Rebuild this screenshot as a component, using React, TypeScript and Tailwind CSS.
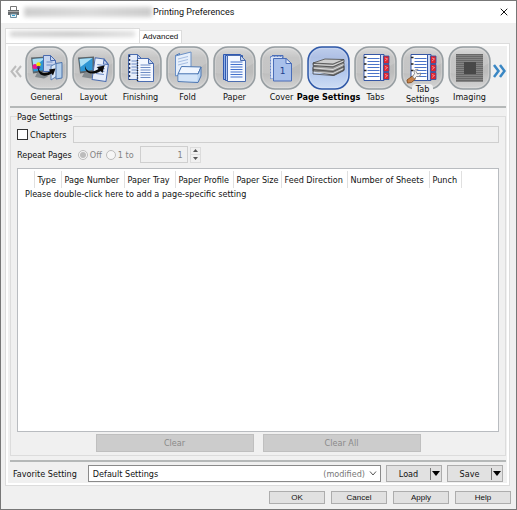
import { useState, type ReactNode } from 'react';
import { X } from 'lucide-react';

interface Category {
  id: string;
  label: string;
  icon: ReactNode;
}

// Sheet of paper with a folded corner and ruled lines
function Sheet({ x, y, w, h, fill = '#e6edfa', line = '#6f8cc4', gap = 3 }: {
  x: number; y: number; w: number; h: number; fill?: string; line?: string; gap?: number;
}) {
  const rows = Math.floor((h - 8) / gap);
  return (
    <g>
      <path
        d={`M${x} ${y}h${w - 5}l5 5v${h - 5}h-${w}z`}
        fill={fill}
        stroke="#4a6cb0"
        strokeLinejoin="round"
      />
      <path d={`M${x + w - 5} ${y}v5h5z`} fill="#c3d2ee" stroke="#4a6cb0" strokeLinejoin="round" />
      {Array.from({ length: rows }, (_, i) => (
        <path key={i} d={`M${x + 3} ${y + 6.5 + i * gap}h${w - 6}`} stroke={line} />
      ))}
    </g>
  );
}

function Monitor() {
  return (
    <g>
      <path d="M12 27l-2 4 9 1.500 4-2-5-4z" fill="#858b8f" />
      <path d="M6 11.500l16-1v15l-14 2z" fill="#5d656a" />
      <path d="M7.500 13l13-1v12l-12 1.500z" fill="#2f96d4" />
      <path d="M7.500 13l13-1-12 9z" fill="#a9def5" />
    </g>
  );
}

function TabbedSheet() {
  return (
    <g>
      <path d="M12 8.500h18v26h-18z" fill="#cdd9f2" stroke="#3556a5" />
      <path d="M29.500 10h5.500v7.500h-5.500zM29.500 18.500h5.500v7h-5.500zM29.500 26.500h5.500v7h-5.500z" fill="#e0242f" stroke="#2c4ea2" strokeWidth=".8" />
      <path d="M31 12l2.500 1-2.500 2M31 20.500l2.500 1-2.500 2M31 28.500l2.500 1-2.500 2" stroke="#f3a9ad" fill="none" strokeWidth=".8" />
      <path d="M10 8.500h16.500v26H10z" fill="#fff" stroke="#3556a5" />
      <path d="M13.500 12.500h12M13.500 15.500h12M13.500 18.500h12M13.500 21.500h12M13.500 24.500h12M13.500 27.500h12M13.500 30.500h12" stroke="#4b74c8" />
      <path d="M10 11.500h2.500M10 18h2.500M10 24.500h2.500M10 31h2.500" stroke="#222" strokeWidth="1.500" />
    </g>
  );
}

const categories: Category[] = [
  {
    id: 'general',
    label: 'General',
    icon: (
      <>
        <Monitor />
        <circle cx="10" cy="20.500" r="2.500" fill="#ed1690" />
        <circle cx="13.500" cy="18.500" r="2.200" fill="#f7e400" />
        <circle cx="13.500" cy="21.500" r="1.800" fill="#5b2d91" />
        <Sheet x={18.500} y={9.500} w={12} h={16} fill="#c8d6f0" />
        <path d="M26 20l6-3v13l-6 4z" fill="#dbe9f8" stroke="#5c82b5" />
        <path d="M31 17.500l6-1v15.500l-6 1z" fill="#b4d0ec" stroke="#4c74ad" />
        <path d="M13 20.500c1 7 7 7.500 12 5l-1-2 6.500-1-2.500 7-1.500-2c-7 4.500-14.500 2-13.500-7z" fill="#0a0a0a" />
      </>
    ),
  },
  {
    id: 'layout',
    label: 'Layout',
    icon: (
      <>
        <Monitor />
        <g transform="rotate(8 28 24)">
          <Sheet x={21.500} y={12.500} w={14} h={22} />
        </g>
        <path d="M13 19.500c1 7 8 7.500 13.500 3.500l-1.500-2 7.500-1.500-2 7.500-1.800-2c-8 5-16.700 2.500-15.700-5.500z" fill="#0a0a0a" />
      </>
    ),
  },
  {
    id: 'finishing',
    label: 'Finishing',
    icon: (
      <>
        <Sheet x={9.500} y={8.500} w={14} h={25} />
        <path d="M10.500 9v25" stroke="#222f55" strokeWidth="1.500" strokeDasharray="2 2" />
        <Sheet x={18.500} y={12.500} w={16} h={23} fill="#f4f7ff" gap={2.500} />
        <path d="M18.500 14v22" stroke="#222" strokeWidth="1.500" strokeDasharray="1 1.500" />
      </>
    ),
  },
  {
    id: 'fold',
    label: 'Fold',
    icon: (
      <>
        <path d="M9.500 9.500l4-2v20l-4 2z" fill="#b5cdec" stroke="#4b76b3" />
        <path d="M9.500 10l15.500-4v20l-15.500 4z" fill="#e6effb" stroke="#6a90c6" />
        <path d="M12 13l10-2.500M12 16l10-2.500M12 19l10-2.500" stroke="#a5bde2" />
        <path d="M15.500 20.500l19.500.5-3 7h-20z" fill="#f0f6ff" stroke="#4b76b3" />
        <path d="M12 28h20l3-7v9l-3 6.500-20-1z" fill="#b9d4f2" stroke="#4b76b3" />
        <path d="M12.500 28.500h19v7l-19-.5z" fill="#d3e4f8" />
      </>
    ),
  },
  {
    id: 'paper',
    label: 'Paper',
    icon: (
      <>
        <path d="M10.500 8.500h17v25h-17z" fill="#8fb0e8" stroke="#2f58b0" />
        <path d="M12.500 9.500h17v25h-17z" fill="#b3c9f2" stroke="#2f58b0" />
        <Sheet x={14.500} y={9.500} w={18} h={26} gap={2.500} line="#4471cc" fill="#f4f8ff" />
      </>
    ),
  },
  {
    id: 'cover',
    label: 'Cover',
    icon: (
      <>
        <path d="M10.500 10.500h12v22h-12z" fill="#dbe5f8" stroke="#6a88c8" strokeDasharray="2 1" />
        <path d="M12 9.500h11v3" fill="none" stroke="#4a6db8" />
        <path d="M13.500 12.500h12.500l5.500 5v17.500h-18z" fill="#a9c0ea" stroke="#4a6db8" />
        <path d="M26 12.500v5h5.500z" fill="#e4ecfa" stroke="#4a6db8" />
        <text x="22.500" y="28" textAnchor="middle" fontSize="9" fill="#1d3f8c" fontFamily="DejaVu Sans, sans-serif">1</text>
      </>
    ),
  },
  {
    id: 'page-settings',
    label: 'Page Settings',
    icon: (
      <g strokeLinejoin="round" stroke="#4a4a4a" strokeWidth=".8">
        <path d="M6 25l21 4.500 10-5v-4l-22-2-9 3z" fill="#8b8b8b" />
        <path d="M6 23.500l20 1.500 11-5-17-2z" fill="#dedede" />
        <path d="M6 20.500v3l20 2 11-5v-4z" fill="#9a9a9a" />
        <path d="M6 18.500l20 1.500 11-4.500-17-2z" fill="#e3e3e3" />
        <path d="M6 17v2.500l20 1.500 11-5v-2.500z" fill="#8d8d8d" />
        <path d="M6 17l12-4 19 .5-11 4.500z" fill="#cfcfcf" />
        <path d="M7 18.500l19 1 10.500-4.500M7 22l19 1.500 10.500-5M7 26l19 1.500 10.500-5" stroke="#f0f0f0" fill="none" />
        <path d="M6 23.500v4.500l20 1.500 11-5.500v-4" fill="none" />
      </g>
    ),
  },
  { id: 'tabs', label: 'Tabs', icon: <TabbedSheet /> },
  {
    id: 'tab-settings',
    label: 'Tab Settings',
    icon: (
      <>
        <TabbedSheet />
        <path d="M11.500 30l3 3-4 3.500-4 .5-.5-3z" fill="#c7824a" stroke="#8a5529" />
        <path d="M11.500 31l2-3.500c-1-3 1-4.500 3.500-4l-2 2 1.500 2.500 3-1c.5 3-1.500 4-4 3.500l-2 2z" fill="#f2f2f2" stroke="#777" strokeWidth=".8" />
      </>
    ),
  },
  {
    id: 'imaging',
    label: 'Imaging',
    icon: (
      <>
        <path d="M8 8h27v28H8z" fill="#848484" />
        {Array.from({ length: 14 }, (_, i) => (
          <path key={i} d={`M8 ${8.5 + i * 2}h27`} stroke="#686868" />
        ))}
        <path d="M16 16h12v12H16z" fill="#484848" />
      </>
    ),
  },
];

const columns = [
  { label: '', width: 'w-4' },
  { label: 'Type', width: 'w-[27px]' },
  { label: 'Page Number', width: 'w-[63px]' },
  { label: 'Paper Tray', width: 'w-[51px]' },
  { label: 'Paper Profile', width: 'w-[58px]' },
  { label: 'Paper Size', width: 'w-[48px]' },
  { label: 'Feed Direction', width: 'w-[66px]' },
  { label: 'Number of Sheets', width: 'w-[82px]' },
  { label: 'Punch', width: 'w-8' },
];

function CategoryButton({ category, active, onClick }: { category: Category; active: boolean; onClick: () => void }) {
  const twoLines = category.id === 'tab-settings';
  return (
    <button onClick={onClick} className="flex min-w-0 flex-1 flex-col items-center">
      <svg width="43" height="44" viewBox="0 0 43 44" className="shrink-0">
        <defs>
          <linearGradient id={`bg-${category.id}`} x1="0" y1="0" x2="0" y2="1">
            <stop offset="0" stopColor={active ? '#b4c6ea' : '#d6d6d6'} />
            <stop offset=".25" stopColor={active ? '#a2b6e0' : '#bdbdbd'} />
            <stop offset=".6" stopColor={active ? '#b3c8ec' : '#bcbcbc'} />
            <stop offset="1" stopColor={active ? '#cfdef5' : '#d4d4d4'} />
          </linearGradient>
        </defs>
        <rect x="1" y="1" width="41" height="42" rx="14" fill={`url(#bg-${category.id})`} stroke={active ? '#3059a8' : '#979ea2'} strokeWidth="1.500" />
        <path d="M2 27c14 2 27-2 39-10v-2a13 13 0 0 0-13-13H15A13 13 0 0 0 2 15z" fill="#fff" opacity=".14" />
        <rect x="2.500" y="2.500" width="38" height="39" rx="12.500" fill="none" stroke="#fff" opacity=".18" />
        {category.icon}
      </svg>
      {twoLines ? (
        <span className="-mt-1.5 flex flex-col items-center leading-[10px]">
          <span className="rounded-t-sm bg-[#f0f0f0] px-1">Tab</span>
          <span>Settings</span>
        </span>
      ) : (
        <span className={active ? 'whitespace-nowrap leading-[14px] font-bold text-black' : 'whitespace-nowrap leading-[14px]'}>
          {category.label}
        </span>
      )}
    </button>
  );
}

// Load / Save button with its attached menu arrow
function SplitButton({ label }: { label: string }) {
  return (
    <div className="flex h-[17px] w-14 items-center border border-[#adadad] bg-[#e1e1e1]">
      <button className="flex-1 text-center">{label}</button>
      <button aria-label={`${label} menu`} className="flex h-3 w-[11px] items-center border-l border-[#777]">
        <svg width="8" height="5" viewBox="0 0 8 5" className="ml-px">
          <path d="M0 0h8L4 5z" fill="#000" />
        </svg>
      </button>
    </div>
  );
}

export default function App() {
  const [active, setActive] = useState('page-settings');
  const [chapters, setChapters] = useState(false);

  return (
    <div className="flex min-h-screen flex-col border border-[#777] bg-[#f0f0f0] font-['DejaVu_Sans_Condensed','DejaVu_Sans',sans-serif] text-[9px] leading-3 text-[#111]">
      {/* Title bar */}
      <header className="flex h-[22px] items-center bg-white px-1.5">
        <svg width="13" height="12" viewBox="0 0 13 12" className="shrink-0">
          <path d="M3.500.5h6v4h-6z" fill="#fff" stroke="#777" />
          <path d="M1 4h11v5H1z" fill="#666b6e" />
          <path d="M1 5.500h11" stroke="#aaa" />
          <path d="M3.500 8h6v3.500h-6z" fill="#e8f4fa" stroke="#6d8ea0" />
          <path d="M5 9.500h3" stroke="#2f9ed0" />
        </svg>
        <div className="ml-1 h-2.5 w-32 bg-linear-to-r from-[#cfcfcf] via-[#dcdcdc] to-[#cccccc] blur-[2px]" />
        <h1 className="ml-px font-['Roboto',sans-serif] text-[9px]">Printing Preferences</h1>
        <button aria-label="Close" className="ml-auto">
          <X className="h-3 w-3" strokeWidth={2} />
        </button>
      </header>

      {/* Tabs */}
      <div className="mt-[5px] flex items-end pl-1 font-['Liberation_Sans',sans-serif] text-[8px]">
        <button aria-label="Printer tab" className="h-[15px] w-[135px] border border-b-0 border-[#dcdcdc] bg-white px-1">
          <span className="mb-1 block h-1.5 w-full bg-linear-to-r from-[#d6d6d6] via-[#cacaca] to-[#e0e0e0] blur-[2px]" />
        </button>
        <button className="h-[13px] w-[42px] border border-b-0 border-l-0 border-[#dcdcdc] bg-white">Advanced</button>
      </div>

      <main className="mr-[6px] ml-1 flex flex-1 flex-col border border-[#dcdcdc] bg-white p-0.5">
        <div className="flex flex-1 flex-col bg-[#f0f0f0] pr-px pl-0.5">
          {/* Category toolbar */}
          <nav className="flex items-start border-b-2 border-[#b5b8b8] pb-0.5">
            <button aria-label="Scroll left" className="flex h-[50px] w-[13px] items-center">
              <svg width="12" height="13" viewBox="0 0 12 13" fill="none" stroke="#bcbcbc" strokeWidth="2">
                <path d="M6 1L1.500 6.500 6 12M11 1L6.500 6.500 11 12" />
              </svg>
            </button>
            <div className="flex min-w-0 flex-1">
              {categories.map((category) => (
                <CategoryButton
                  key={category.id}
                  category={category}
                  active={active === category.id}
                  onClick={() => setActive(category.id)}
                />
              ))}
            </div>
            <button aria-label="Scroll right" className="flex h-[50px] w-[13px] items-center">
              <svg width="13" height="14" viewBox="0 0 13 14" fill="none" stroke="#3a87c4" strokeWidth="2.500">
                <path d="M1 1l4.500 6L1 13M7 1l4.500 6L7 13" />
              </svg>
            </button>
          </nav>

          <section aria-labelledby="page-settings-title" className="mt-2 mb-1 flex flex-1 flex-col border border-[#dcdcdc] px-1.5 pb-[3px]">
            <h2 id="page-settings-title" className="-mt-1.5 self-start bg-[#f0f0f0] pr-0.5 font-normal">Page Settings</h2>
            <div className="mt-[3px] flex h-[17px] items-center">
              <label className="flex items-center gap-0.5">
                <input
                  type="checkbox"
                  checked={chapters}
                  onChange={(e) => setChapters(e.target.checked)}
                  className="h-[11px] w-[11px] appearance-none border border-[#333] bg-white checked:bg-[#333]"
                />
                Chapters
              </label>
              <input aria-label="Chapter list" disabled className="ml-1.5 h-full min-w-0 flex-1 border border-[#cfcfcf] bg-[#f0f0f0] px-1" />
            </div>

            <div className="mt-[3px] flex h-[17px] items-center text-[#838383]">
              <span className="text-[#111]">Repeat Pages</span>
              <label className="ml-1.5 flex items-center gap-0.5">
                <span className="flex h-[10px] w-[10px] items-center justify-center rounded-full border border-[#bcbcbc] bg-[#f6f6f6]">
                  <input type="radio" name="repeat" disabled defaultChecked className="h-1.5 w-1.5 appearance-none rounded-full checked:bg-[#bcbcbc]" />
                </span>
                Off
              </label>
              <label className="ml-1 flex items-center gap-0.5">
                <span className="flex h-[10px] w-[10px] items-center justify-center rounded-full border border-[#bcbcbc] bg-[#f6f6f6]">
                  <input type="radio" name="repeat" disabled className="h-1.5 w-1.5 appearance-none rounded-full checked:bg-[#bcbcbc]" />
                </span>
                1 to
              </label>
              <input aria-label="Repeat to page" disabled defaultValue="1" className="ml-1.5 h-full w-12 border border-[#cfcfcf] bg-[#f0f0f0] pr-1 text-right" />
              <div className="ml-0.5 flex flex-col">
                <button disabled aria-label="Increase" className="flex h-2 w-[11px] items-center justify-center border border-[#dcdcdc]">
                  <svg width="5" height="3" viewBox="0 0 5 3"><path d="M0 3h5L2.500 0z" fill="#555" /></svg>
                </button>
                <button disabled aria-label="Decrease" className="flex h-2 w-[11px] items-center justify-center border border-t-0 border-[#dcdcdc]">
                  <svg width="5" height="3" viewBox="0 0 5 3"><path d="M0 0h5L2.500 3z" fill="#555" /></svg>
                </button>
              </div>
            </div>

            {/* Page-specific settings */}
            <div className="mt-[5px] flex-1 border border-[#b9bcc0] bg-white pt-0.5">
              <table className="w-full table-fixed border-collapse text-left">
                <thead>
                  <tr className="h-[17px]">
                    {columns.map((column) => (
                      <th key={column.label} className={`${column.width} border-r border-[#e0e0e0] p-0 pl-[3px] font-normal whitespace-nowrap`}>
                        {column.label}
                      </th>
                    ))}
                    <th className="p-0" />
                  </tr>
                </thead>
                <tbody>
                  <tr>
                    <td colSpan={10} className="p-0 pl-[7px]">Please double-click here to add a page-specific setting</td>
                  </tr>
                </tbody>
              </table>
            </div>

            <div className="mt-0.5 flex justify-center gap-[9px] text-[#8a8a8a]">
              <button disabled className="h-[18px] w-[158px] border border-[#bfbfbf] bg-[#cccccc]">Clear</button>
              <button disabled className="h-[18px] w-[158px] border border-[#bfbfbf] bg-[#cccccc]">Clear All</button>
            </div>
          </section>

          {/* Favorite setting */}
          <div className="flex items-center border-t-2 border-[#b5b8b8] pt-[3px] pr-[3px] pb-px pl-[3px]">
            <label htmlFor="favorite">Favorite Setting</label>
            <div className="relative ml-[11px] flex-1">
              <select id="favorite" className="block h-[17px] w-full appearance-none border border-[#8a8a8a] bg-white pl-1">
                <option>Default Settings</option>
              </select>
              <div className="pointer-events-none absolute inset-y-0 right-1 flex items-center gap-1 text-[#777]">
                (modified)
                <svg width="8" height="5" viewBox="0 0 8 5" fill="none" stroke="#555"><path d="M1 .5L4 4 7 .5" /></svg>
              </div>
            </div>
            <div className="ml-[5px] flex gap-[5px]">
              <SplitButton label="Load" />
              <SplitButton label="Save" />
            </div>
          </div>
        </div>
      </main>

      <footer className="flex justify-end gap-1.5 px-[5px] pt-[5px] pb-[5px] font-['Liberation_Sans',sans-serif] text-[8px]">
        {['OK', 'Cancel', 'Apply', 'Help'].map((label) => (
          <button key={label} className="h-[13px] w-14 border border-[#adadad] bg-[#e1e1e1] leading-[11px]">
            {label}
          </button>
        ))}
      </footer>
    </div>
  );
}
